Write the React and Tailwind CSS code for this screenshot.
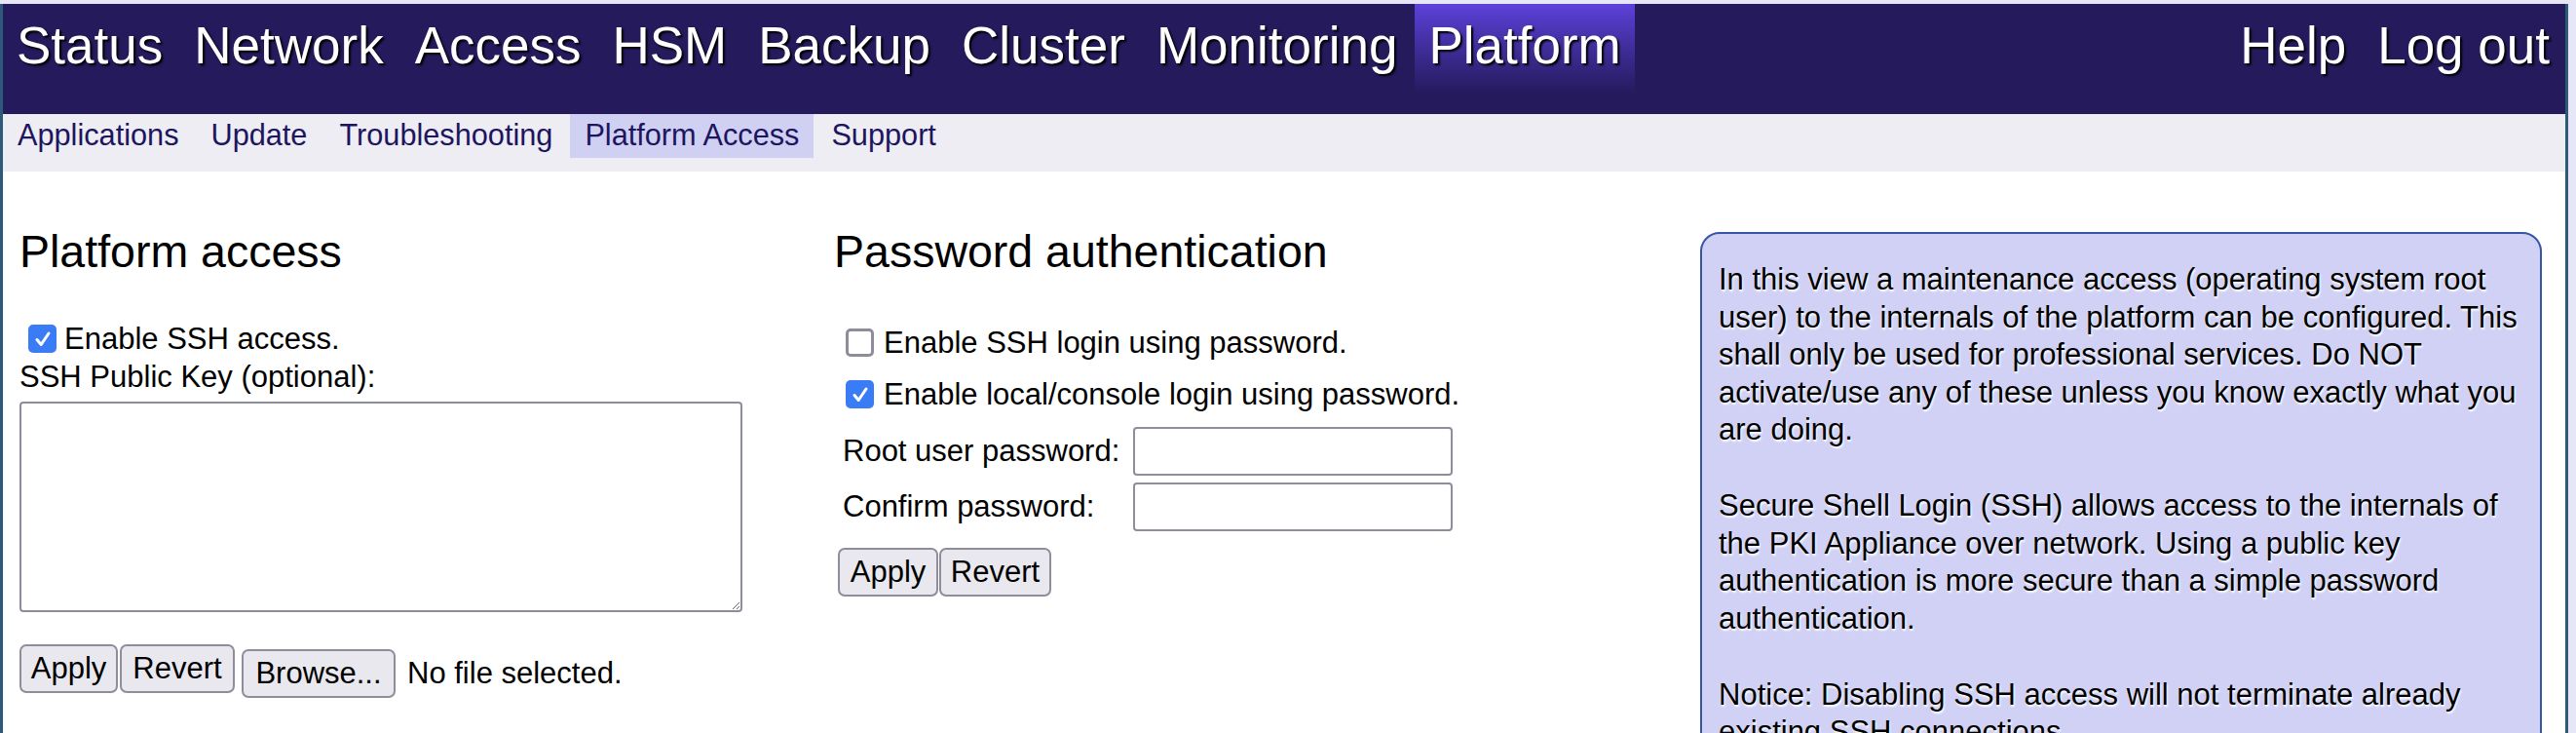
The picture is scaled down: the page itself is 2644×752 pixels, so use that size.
import React from "react";

const font = { fontFamily: '"Liberation Sans", Arial, Helvetica, sans-serif' };

function Check({ checked }) {
  if (checked) {
    return (
      <span className="flex h-[29px] w-[29px] shrink-0 items-center justify-center rounded-[5px] bg-[#3a7cf6]">
        <svg width="20" height="20" viewBox="0 0 20 20" fill="none">
          <path d="M4 10.5 L8.2 15.5 L16 4" stroke="#fff" strokeWidth="3" strokeLinecap="round" strokeLinejoin="round" />
        </svg>
      </span>
    );
  }
  return <span className="block h-[29px] w-[29px] shrink-0 rounded-[5px] border-[3px] border-[#8e8d9b] bg-white" />;
}

function Btn({ children, w }) {
  return (
    <button
      className={`flex h-[50px] items-center justify-center rounded-[7px] border-2 border-[#8e8d9b] bg-[#e9e8ef] text-[31px] leading-[38px] text-black ${w}`}
    >
      {children}
    </button>
  );
}

const mainNav = ["Status", "Network", "Access", "HSM", "Backup", "Cluster", "Monitoring", "Platform"];
const subNav = ["Applications", "Update", "Troubleshooting", "Platform Access", "Support"];

function Lines({ lines }) {
  return lines.map((l, i) => (
    <span key={i} className="block whitespace-nowrap">
      {l}
    </span>
  ));
}

export default function App() {
  return (
    <div style={font} className="h-screen overflow-hidden bg-[#e6e6f8] pr-[8px] pt-[4px]">
      <div className="h-[748px] overflow-hidden border-x-[3px] border-[#2b5b78] bg-white">
        {/* main nav */}
        <div className="flex h-[113px] items-start justify-between bg-[#241a5c] text-[53px] text-white [text-shadow:2px_2px_2px_#000]">
          <div className="flex gap-[4px]">
            {mainNav.map((n) => (
              <div
                key={n}
                className={`h-[93px] px-[14px] pt-[13px] leading-[60px] whitespace-nowrap ${
                  n === "Platform" ? "bg-gradient-to-b from-[#5d41da] to-[#241a5c]" : ""
                }`}
              >
                {n}
              </div>
            ))}
          </div>
          <div className="flex gap-[4px] pr-[2px]">
            {["Help", "Log out"].map((n) => (
              <div key={n} className="h-[93px] px-[14px] pt-[13px] leading-[60px] whitespace-nowrap">
                {n}
              </div>
            ))}
          </div>
        </div>

        {/* sub nav */}
        <div className="flex h-[59px] items-start gap-[3px] bg-[#ededf3] text-[30.7px] text-[#1d1560]">
          {subNav.map((n) => (
            <div
              key={n}
              className={`h-[45px] px-[15px] pt-[3px] leading-[38px] whitespace-nowrap ${
                n === "Platform Access" ? "bg-[#d0d0f2]" : ""
              }`}
            >
              {n}
            </div>
          ))}
        </div>

        {/* content */}
        <div className="flex items-start pl-[17px] text-[31px] text-black">
          {/* column 1 */}
          <div className="w-[836px] shrink-0">
            <h2 className="mt-[55px] text-[46.5px] leading-[54px] font-normal">Platform access</h2>
            <div className="mt-[43px] flex h-[39px] items-center">
              <span className="ml-[9px]">
                <Check checked />
              </span>
              <span className="ml-[8px] leading-[39px]">Enable SSH access.</span>
            </div>
            <div className="h-[39px] leading-[39px]">SSH Public Key (optional):</div>
            <textarea className="mt-[6px] block h-[216px] w-[742px] rounded-[4px] border-2 border-[#8e8d9b] bg-white" />
            <div className="mt-[33px] flex items-start">
              <Btn w="w-[101px]">Apply</Btn>
              <span className="ml-[2px]">
                <Btn w="w-[118px]">Revert</Btn>
              </span>
              <span className="ml-[7px] mt-[5px]">
                <Btn w="w-[158px]">Browse...</Btn>
              </span>
              <span className="ml-[12px] mt-[5px] flex h-[50px] items-center whitespace-nowrap">No file selected.</span>
            </div>
          </div>

          {/* column 2 */}
          <div className="w-[889px] shrink-0">
            <h2 className="mt-[55px] text-[46.5px] leading-[54px] font-normal">Password authentication</h2>
            <div className="mt-[47px] ml-[12px] flex h-[39px] items-center">
              <Check checked={false} />
              <span className="ml-[10px] leading-[39px] whitespace-nowrap">Enable SSH login using password.</span>
            </div>
            <div className="mt-[14px] ml-[12px] flex h-[39px] items-center">
              <Check checked />
              <span className="ml-[10px] leading-[39px] whitespace-nowrap">Enable local/console login using password.</span>
            </div>
            <div className="mt-[14px] ml-[9px] flex flex-col gap-[7px]">
              <div className="flex h-[50px] items-center">
                <span className="w-[298px] whitespace-nowrap">Root user password:</span>
                <input type="password" className="h-[50px] w-[328px] rounded-[4px] border-2 border-[#8e8d9b] bg-white" />
              </div>
              <div className="flex h-[50px] items-center">
                <span className="w-[298px] whitespace-nowrap">Confirm password:</span>
                <input type="password" className="h-[50px] w-[328px] rounded-[4px] border-2 border-[#8e8d9b] bg-white" />
              </div>
            </div>
            <div className="mt-[17px] ml-[4px] flex items-start">
              <Btn w="w-[103px]">Apply</Btn>
              <span className="ml-[1px]">
                <Btn w="w-[115px]">Revert</Btn>
              </span>
            </div>
          </div>

          {/* info box */}
          <div className="mt-[62px] h-[560px] w-[864px] shrink-0 rounded-[20px] border-2 border-[#3556a3] bg-[#d1d1f5] px-[17px] pt-[28px] leading-[38.5px] [text-shadow:1px_2px_2px_#ffffff]">
            <p className="mb-[39.5px]">
              <Lines
                lines={[
                  "In this view a maintenance access (operating system root",
                  "user) to the internals of the platform can be configured. This",
                  "shall only be used for professional services. Do NOT",
                  "activate/use any of these unless you know exactly what you",
                  "are doing.",
                ]}
              />
            </p>
            <p className="mb-[39.5px]">
              <Lines
                lines={[
                  "Secure Shell Login (SSH) allows access to the internals of",
                  "the PKI Appliance over network. Using a public key",
                  "authentication is more secure than a simple password",
                  "authentication.",
                ]}
              />
            </p>
            <p>
              <Lines lines={["Notice: Disabling SSH access will not terminate already", "existing SSH connections."]} />
            </p>
          </div>
        </div>
      </div>
    </div>
  );
}
